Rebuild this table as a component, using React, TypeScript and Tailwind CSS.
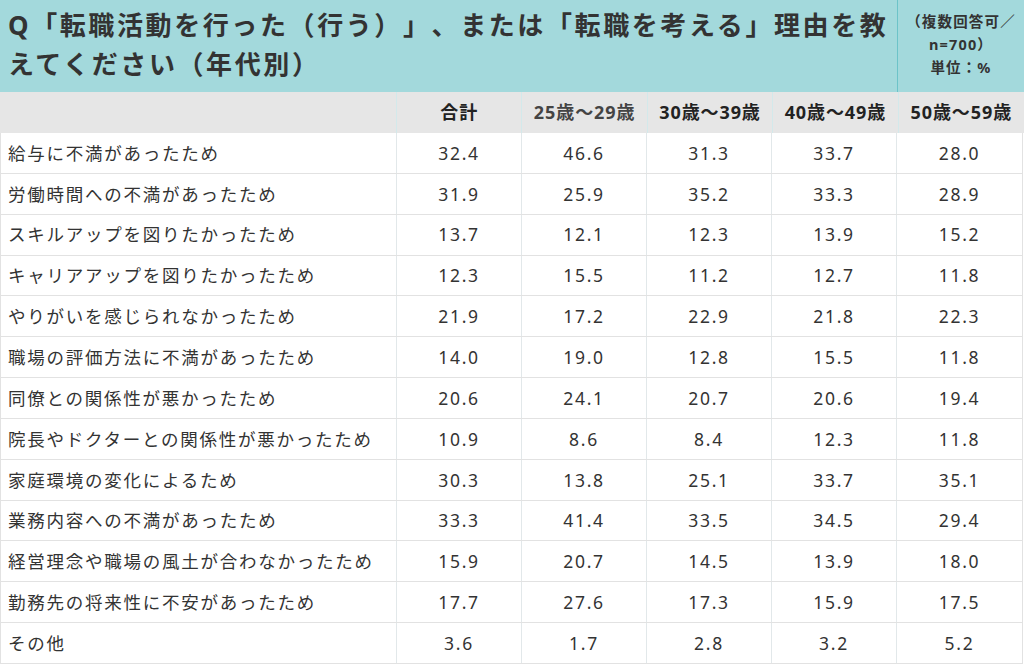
import React from 'react';

const ages = ['合計', '25歳〜29歳', '30歳〜39歳', '40歳〜49歳', '50歳〜59歳'];

const rows: [string, string[]][] = [
  ['給与に不満があったため', ['32.4', '46.6', '31.3', '33.7', '28.0']],
  ['労働時間への不満があったため', ['31.9', '25.9', '35.2', '33.3', '28.9']],
  ['スキルアップを図りたかったため', ['13.7', '12.1', '12.3', '13.9', '15.2']],
  ['キャリアアップを図りたかったため', ['12.3', '15.5', '11.2', '12.7', '11.8']],
  ['やりがいを感じられなかったため', ['21.9', '17.2', '22.9', '21.8', '22.3']],
  ['職場の評価方法に不満があったため', ['14.0', '19.0', '12.8', '15.5', '11.8']],
  ['同僚との関係性が悪かったため', ['20.6', '24.1', '20.7', '20.6', '19.4']],
  ['院長やドクターとの関係性が悪かったため', ['10.9', '8.6', '8.4', '12.3', '11.8']],
  ['家庭環境の変化によるため', ['30.3', '13.8', '25.1', '33.7', '35.1']],
  ['業務内容への不満があったため', ['33.3', '41.4', '33.5', '34.5', '29.4']],
  ['経営理念や職場の風土が合わなかったため', ['15.9', '20.7', '14.5', '13.9', '18.0']],
  ['勤務先の将来性に不安があったため', ['17.7', '27.6', '17.3', '15.9', '17.5']],
  ['その他', ['3.6', '1.7', '2.8', '3.2', '5.2']],
];

export default function App() {
  return (
    <div
      className="w-[1024px] h-[665px] bg-white text-[#333] overflow-hidden [text-spacing-trim:space-all]"
      style={{ fontFamily: '"Noto Sans", "Noto Sans CJK JP", sans-serif' }}
    >
      {/* Question header */}
      <div className="flex h-[92px] bg-[#a3d9dc]">
        <div className="w-[898px] shrink-0 border-r border-[#6cc3c9] pl-2 pt-[6px] text-[26px] leading-[39px] font-bold tracking-[0.1em] text-[#333]">
          Q「転職活動を行った（行う）」、または「転職を考える」理由を教えてください（年代別）
        </div>
        <div className="flex-1 flex flex-col items-center justify-center text-[14.5px] leading-[23px] font-bold tracking-[0.08em] text-[#333] pb-[3px]">
          <span>（複数回答可／</span>
          <span>n=700）</span>
          <span>単位：%</span>
        </div>
      </div>

      {/* Column headers */}
      <div className="grid grid-cols-[397px_repeat(5,1fr)] h-[41px] bg-[#e6e6e6] text-[18px] font-bold tracking-[0.05em] text-[#222]">
        <div className="border-r border-[#d3e9eb]" />
        {ages.map((a, i) => (
          <div
            key={a}
            className={`flex items-center justify-center ${i < 4 ? 'border-r border-[#d3e9eb]' : ''} ${i === 1 ? 'text-[#444]' : ''}`}
          >
            {a}
          </div>
        ))}
      </div>

      {/* Body */}
      <div className="border-l border-r border-[#e2e2e2] w-[1023px]">
        {rows.map(([label, vals]) => (
          <div
            key={label}
            className="grid grid-cols-[396px_repeat(5,1fr)] h-[40.85px] border-b border-[#e2e2e2] text-[17.5px] tracking-[0.1em]"
          >
            <div className="flex items-center pl-[7px] border-r border-[#e2e8ea] whitespace-nowrap">{label}</div>
            {vals.map((v, i) => (
              <div
                key={i}
                className={`flex items-center justify-center ${i < 4 ? 'border-r border-[#e2e8ea]' : ''}`}
              >
                {v}
              </div>
            ))}
          </div>
        ))}
      </div>
    </div>
  );
}
